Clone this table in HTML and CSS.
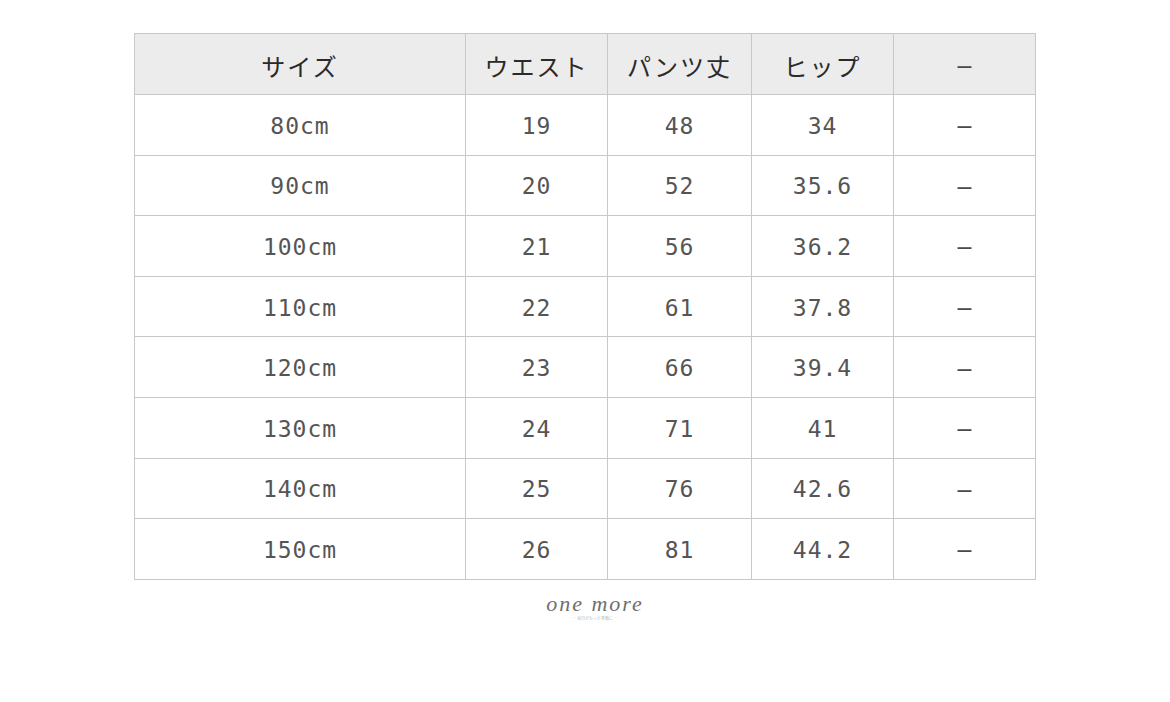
FILE: index.html
```html
<!DOCTYPE html>
<html lang="ja">
<head>
<meta charset="utf-8">
<link rel="stylesheet" href="styles.css">
</head>
<body>
<div class="page">
  <table class="size-table">
    <colgroup>
      <col class="c1"><col class="c2"><col class="c3"><col class="c4"><col class="c5">
    </colgroup>
    <thead>
      <tr class="head">
        <th>サイズ</th><th>ウエスト</th><th>パンツ丈</th><th>ヒップ</th><th class="dash">–</th>
      </tr>
    </thead>
    <tbody>
      <tr><td>80cm</td><td>19</td><td>48</td><td>34</td><td class="dash">–</td></tr>
      <tr><td>90cm</td><td>20</td><td>52</td><td>35.6</td><td class="dash">–</td></tr>
      <tr><td>100cm</td><td>21</td><td>56</td><td>36.2</td><td class="dash">–</td></tr>
      <tr><td>110cm</td><td>22</td><td>61</td><td>37.8</td><td class="dash">–</td></tr>
      <tr><td>120cm</td><td>23</td><td>66</td><td>39.4</td><td class="dash">–</td></tr>
      <tr><td>130cm</td><td>24</td><td>71</td><td>41</td><td class="dash">–</td></tr>
      <tr><td>140cm</td><td>25</td><td>76</td><td>42.6</td><td class="dash">–</td></tr>
      <tr><td>150cm</td><td>26</td><td>81</td><td>44.2</td><td class="dash">–</td></tr>
    </tbody>
  </table>
  <div class="logo">
    <div class="logo-name">one more</div>
    <div class="logo-sub">— 毎日がもっと素敵に —</div>
  </div>
</div>
</body>
</html>
```

FILE: styles.css
```css
html, body {
  margin: 0;
  padding: 0;
  background: #ffffff;
}
.page {
  width: 1170px;
  height: 702px;
  padding: 33px 0 0 134px;
  box-sizing: border-box;
}
.size-table {
  border-collapse: collapse;
  table-layout: fixed;
  width: 902px;
}
.c1 { width: 331px; }
.c2 { width: 142px; }
.c3 { width: 144px; }
.c4 { width: 142px; }
.c5 { width: 142px; }
.size-table th,
.size-table td {
  border: 1px solid #c8c8c8;
  text-align: center;
  vertical-align: middle;
  padding: 0;
}
.size-table th {
  height: 57px;
  padding-top: 3px;
  background: #ececec;
  font-family: "Noto Sans CJK JP", sans-serif;
  font-weight: 400;
  font-size: 24px;
  letter-spacing: 2px;
  color: #2a2a2a;
}
.size-table td {
  height: 57.6px;
  padding-top: 2px;
  font-family: "DejaVu Sans Mono", monospace;
  font-size: 23px;
  letter-spacing: 1px;
  color: #555;
}
.size-table .dash {
  font-family: "Liberation Sans", sans-serif;
  font-size: 25px;
  letter-spacing: 0;
  color: #4a4a4a;
}
.logo {
  margin-top: 13px;
  width: 902px;
  text-align: center;
  color: #6e6e6e;
}
.logo-name {
  font-family: "Liberation Serif", serif;
  font-style: italic;
  font-size: 22px;
  letter-spacing: 2px;
  line-height: 22px;
  padding-left: 20px;
}
.logo-sub {
  font-family: "Noto Sans CJK JP", sans-serif;
  font-size: 4px;
  line-height: 6px;
  color: #bbb;
  padding-left: 20px;
}
```
